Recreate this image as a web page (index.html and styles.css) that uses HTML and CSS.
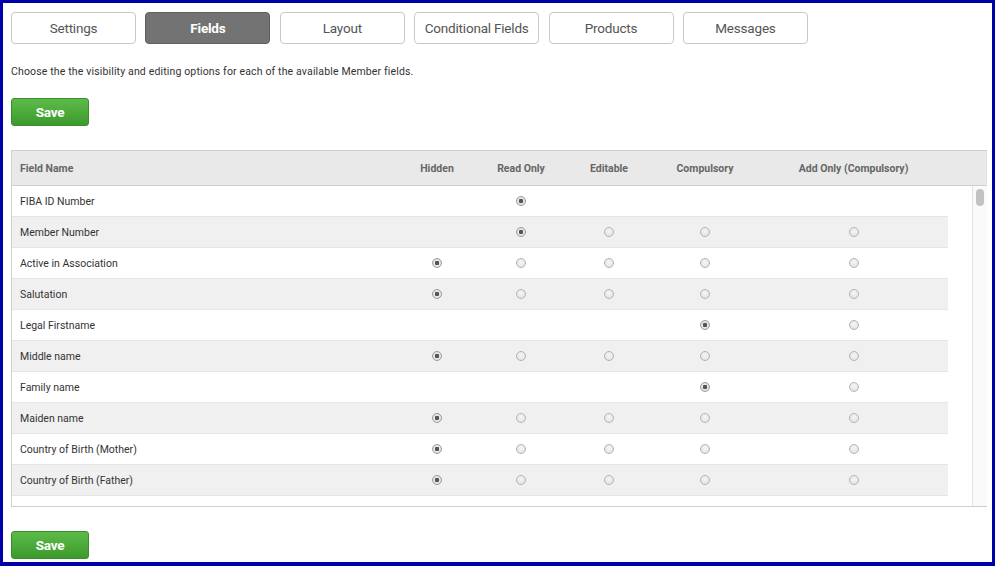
FILE: index.html
```html
<!DOCTYPE html>
<html>
<head>
<meta charset="utf-8">
<link rel="stylesheet" href="styles.css">
</head>
<body>
<div class="frame">
  <nav class="tabs">
    <div class="tab">Settings</div>
    <div class="tab active">Fields</div>
    <div class="tab">Layout</div>
    <div class="tab">Conditional Fields</div>
    <div class="tab">Products</div>
    <div class="tab">Messages</div>
  </nav>
  <p class="intro">Choose the the visibility and editing options for each of the available Member fields.</p>
  <button class="save">Save</button>
  <div class="grid">
    <div class="head">
      <div class="c name">Field Name</div>
      <div class="c">Hidden</div>
      <div class="c">Read Only</div>
      <div class="c">Editable</div>
      <div class="c">Compulsory</div>
      <div class="c">Add Only (Compulsory)</div>
    </div>
    <div class="body">
      <div class="rows">
        <div class="row"><div class="c name">FIBA ID Number</div><div class="c"></div><div class="c"><span class="r on"></span></div><div class="c"></div><div class="c"></div><div class="c"></div></div>
        <div class="row"><div class="c name">Member Number</div><div class="c"></div><div class="c"><span class="r on"></span></div><div class="c"><span class="r"></span></div><div class="c"><span class="r"></span></div><div class="c"><span class="r"></span></div></div>
        <div class="row"><div class="c name">Active in Association</div><div class="c"><span class="r on"></span></div><div class="c"><span class="r"></span></div><div class="c"><span class="r"></span></div><div class="c"><span class="r"></span></div><div class="c"><span class="r"></span></div></div>
        <div class="row"><div class="c name">Salutation</div><div class="c"><span class="r on"></span></div><div class="c"><span class="r"></span></div><div class="c"><span class="r"></span></div><div class="c"><span class="r"></span></div><div class="c"><span class="r"></span></div></div>
        <div class="row"><div class="c name">Legal Firstname</div><div class="c"></div><div class="c"></div><div class="c"></div><div class="c"><span class="r on"></span></div><div class="c"><span class="r"></span></div></div>
        <div class="row"><div class="c name">Middle name</div><div class="c"><span class="r on"></span></div><div class="c"><span class="r"></span></div><div class="c"><span class="r"></span></div><div class="c"><span class="r"></span></div><div class="c"><span class="r"></span></div></div>
        <div class="row"><div class="c name">Family name</div><div class="c"></div><div class="c"></div><div class="c"></div><div class="c"><span class="r on"></span></div><div class="c"><span class="r"></span></div></div>
        <div class="row"><div class="c name">Maiden name</div><div class="c"><span class="r on"></span></div><div class="c"><span class="r"></span></div><div class="c"><span class="r"></span></div><div class="c"><span class="r"></span></div><div class="c"><span class="r"></span></div></div>
        <div class="row"><div class="c name">Country of Birth (Mother)</div><div class="c"><span class="r on"></span></div><div class="c"><span class="r"></span></div><div class="c"><span class="r"></span></div><div class="c"><span class="r"></span></div><div class="c"><span class="r"></span></div></div>
        <div class="row"><div class="c name">Country of Birth (Father)</div><div class="c"><span class="r on"></span></div><div class="c"><span class="r"></span></div><div class="c"><span class="r"></span></div><div class="c"><span class="r"></span></div><div class="c"><span class="r"></span></div></div>
        <div class="row"></div>
      </div>
      <div class="scrollbar"><div class="thumb"></div></div>
    </div>
  </div>
  <button class="save bottom">Save</button>
</div>
</body>
</html>
```
FILE: styles.css
```css
* { box-sizing: border-box; }
html, body { margin: 0; padding: 0; background: #fff; }
body { font-family: Roboto, "Liberation Sans", sans-serif; color: #333; }

.frame {
  width: 995px;
  height: 566px;
  border: 3px solid #0000a8;
  border-bottom-width: 4px;
  padding: 9px 8px 0 8px;
  overflow: hidden;
}

.tabs { display: flex; gap: 9.4px; }
.tab {
  width: 125px;
  height: 32px;
  border: 1px solid #c8c8c8;
  border-radius: 4px;
  background: #fff;
  color: #555;
  font-size: 13.5px;
  letter-spacing: -0.2px;
  display: flex;
  align-items: center;
  justify-content: center;
}
.tab.active {
  background: #737373;
  border-color: #5e5e5e;
  color: #fff;
  font-weight: bold;
}

.intro {
  margin: 21px 0 0 0;
  font-size: 10.5px;
  letter-spacing: 0.15px;
  color: #333;
  line-height: 14px;
}

.save {
  display: block;
  margin-top: 19px;
  width: 78px;
  height: 28px;
  border: 1px solid #3a8f2c;
  border-radius: 3px;
  background: linear-gradient(#5cbb48, #3c9a2d);
  color: #fff;
  font-family: Roboto, "Liberation Sans", sans-serif;
  font-weight: bold;
  font-size: 13.5px;
  letter-spacing: -0.3px;
  padding: 0;
}
.save.bottom { margin-top: 24px; }

.grid {
  margin-top: 24px;
  width: 976px;
  border: 1px solid #cfcfcf;
  border-right: none;
}
.head, .row {
  display: grid;
  grid-template-columns: 383px 84px 84px 92px 100px 197px;
  align-items: center;
}
.head {
  height: 35px;
  background: #e9e9e9;
  border-bottom: 1px solid #cfcfcf;
  border-right: 1px solid #e0e0e0;
  font-size: 10.5px;
  font-weight: bold;
  color: #666;
}
.c { text-align: center; display: flex; justify-content: center; align-items: center; }
.c.name { justify-content: flex-start; padding-left: 8px; }

.body { display: flex; height: 320px; }
.rows { width: 960px; overflow: hidden; }
.row {
  width: 936px;
  height: 31px;
  border-bottom: 1px solid #e6e6e6;
  font-size: 10.5px;
  color: #333;
}
.row:nth-child(even) { background: #f0f0f0; }
.scrollbar {
  width: 15px;
  height: 320px;
  margin-bottom: -1px;
  background: #fafafa;
  border-left: 1px solid #e2e2e2;
  padding: 3px 0 0 3px;
  position: relative;
  z-index: 1;
}
.thumb {
  width: 8px;
  height: 17px;
  border-radius: 4px;
  background: #c2c2c2;
}

.r {
  width: 10px;
  height: 10px;
  border-radius: 50%;
  border: 1px solid #b4b4b4;
  background: radial-gradient(circle at 50% 40%, #f6f6f6, #dedede);
  display: inline-block;
}
.r.on {
  border-color: #9a9a9a;
  background: radial-gradient(circle, #555 0 2px, #e4e4e4 2.5px);
}
```
